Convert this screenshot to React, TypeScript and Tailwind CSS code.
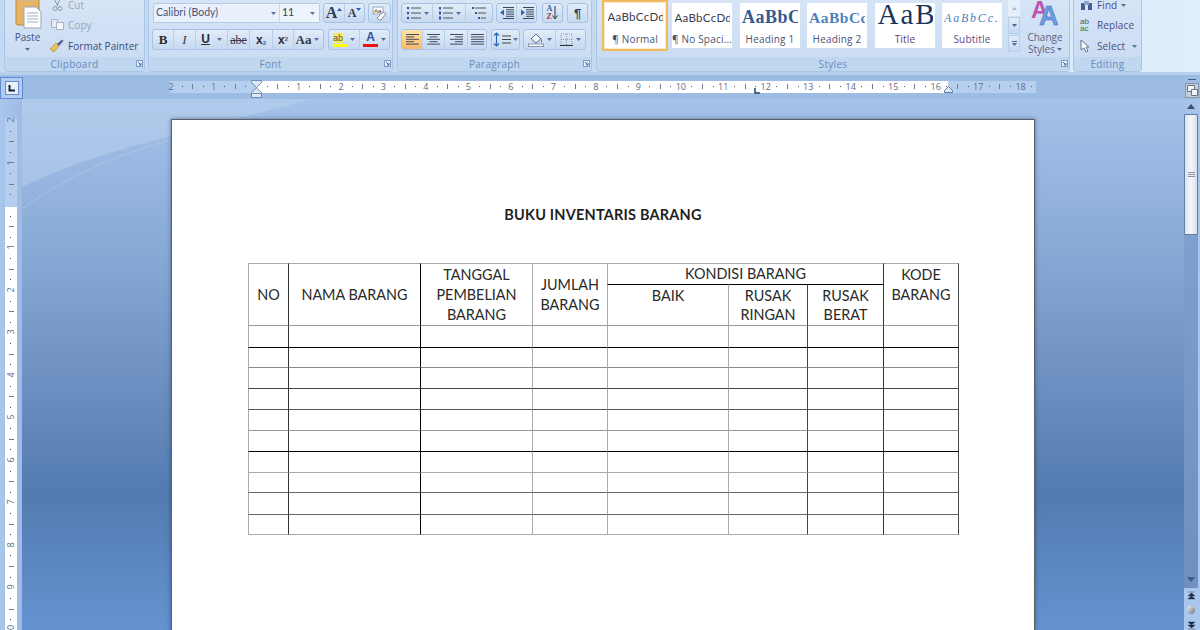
import React from "react";

const UI = "font-['Open_Sans',sans-serif]";

const Caret = ({ c = "#5a6f9c" }: { c?: string }) => (
  <svg width="5" height="3" viewBox="0 0 5 3" className="shrink-0"><path d="M0 0h5L2.5 3z" fill={c} /></svg>
);

const Launcher = () => (
  <svg width="7" height="7" viewBox="0 0 7 7" className="shrink-0">
    <rect x="0.5" y="0.5" width="6" height="6" fill="#e6eef9" stroke="#7f9cc6" />
    <path d="M2 2l3 3M5 3v2H3" stroke="#47679b" fill="none" />
  </svg>
);

function Group({ title, width, children, launcher = true }: { title: string; width: string; children: React.ReactNode; launcher?: boolean }) {
  return (
    <div className={`${width} flex h-[72px] shrink-0 flex-col overflow-hidden rounded-b-[4px] border border-t-0 border-[#a9c6e8] bg-gradient-to-b from-[#d6e4f6] to-[#c9dbf2]`}>
      <div className="relative h-[57px] shrink-0">{children}</div>
      <div className={`${UI} relative flex h-[14px] items-center justify-center bg-[#c0d7f0] pt-px text-[10px] tracking-[0.3px] text-[#6a8bbd]`}>
        {title}
        {launcher && <span className="absolute right-[1px] top-[3px] flex"><Launcher /></span>}
      </div>
    </div>
  );
}

const Box = ({ className, children }: { className: string; children: React.ReactNode }) => (
  <div className={`absolute flex items-center overflow-hidden rounded-[3px] border border-[#a7c2e4] bg-gradient-to-b from-[#e2ecf9] to-[#c6d9f0] ${className}`}>{children}</div>
);

const Cell = ({ w, children, divider = true, active = false }: { w: string; children: React.ReactNode; divider?: boolean; active?: boolean }) => (
  <div className={`${w} flex h-full shrink-0 items-center justify-center gap-[3px] ${divider ? "border-r border-[#b9cfe9]" : ""} ${active ? "bg-gradient-to-b from-[#fde3a8] to-[#fbb869]" : ""}`}>{children}</div>
);

function AlignIcon({ mode }: { mode: "l" | "c" | "r" | "j" }) {
  const rows = [0, 1, 2, 3, 4];
  const wid = (i: number) => (mode === "j" ? 13 : i % 2 ? 8 : 13);
  const x = (i: number) => (mode === "l" || mode === "j" ? 0 : mode === "c" ? (13 - wid(i)) / 2 : 13 - wid(i));
  return (
    <svg width="13" height="11" viewBox="0 0 13 11">
      {rows.map((i) => <rect key={i} x={x(i)} y={i * 2.4} width={wid(i)} height="1" fill="#444c5e" />)}
    </svg>
  );
}

const ListLines = ({ kind }: { kind: "b" | "n" | "m" }) => (
  <svg width="15" height="13" viewBox="0 0 15 13">
    {[1, 6, 11].map((y, i) => (
      <g key={y}>
        {kind === "b" && <circle cx="2" cy={y} r="1.2" fill="#2a4f9c" />}
        {kind === "n" && <rect x="1" y={y - 1.5} width="2" height="3" fill="#2f55a0" />}
        {kind === "m" && <rect x={i * 3} y={y - 1} width="2" height="2" fill="#2f55a0" />}
        <rect x={kind === "m" ? 3 + i * 3 : 5} y={y - 0.5} width={kind === "m" ? 11 - i * 3 : 10} height="1" fill="#555" />
      </g>
    ))}
  </svg>
);

const IndentIcon = ({ dir }: { dir: "l" | "r" }) => (
  <svg width="14" height="12" viewBox="0 0 14 12">
    {[0, 2.2, 4.4, 6.6, 8.8, 11].map((y, i) => <rect key={i} x={i > 0 && i < 5 ? 6 : 3} y={y} width={i > 0 && i < 5 ? 8 : 11} height="1" fill="#3d4658" />)}
    <path d={dir === "l" ? "M0 5.5l4-3v6z" : "M5 5.5l-4-3v6z"} fill="#2d63b5" />
  </svg>
);

const Tile = ({ w, preview, label, labelCls, active }: { w: string; preview: React.ReactNode; label: string; labelCls?: string; active?: boolean }) => (
  <div className={`${w} flex shrink-0 flex-col items-center overflow-hidden bg-white ${active ? "h-[51px] border-2 border-[#f3b95d] -mt-[3px] shadow-[inset_0_0_0_1px_#fdeccb]" : "h-[45px]"}`}>
    <div className="flex h-[29px] w-full items-center justify-center overflow-hidden whitespace-nowrap">{preview}</div>
    <div className={`${UI} whitespace-nowrap text-[10px] tracking-[0.2px] ${labelCls ?? "text-[#4a5472]"} ${active ? "mt-[1px]" : ""}`}>{label}</div>
  </div>
);

function HRuler() {
  const ticks: React.ReactNode[] = [];
  for (let q = -8; q <= 75; q++) {
    const x = 86 + q * 10.62;
    if (x < 1 || x > 864 || q === 0) continue;
    const n = q / 4;
    if (q % 4 === 0) {
      ticks.push(<span key={q} style={{ left: x - 10 }} className={`${UI} absolute top-[-1px] w-[20px] text-center text-[9px] leading-[14px] text-[#5d6b88]`}>{Math.abs(n)}</span>);
    } else if (q % 2 === 0) {
      ticks.push(<span key={q} style={{ left: x }} className="absolute top-[3px] h-[5px] w-px bg-[#6e7b93]" />);
    } else {
      ticks.push(<span key={q} style={{ left: x }} className="absolute top-[5px] h-px w-px bg-[#46526e]" />);
    }
  }
  return (
    <div className="relative mt-[6px] ml-[147px] h-[12px] w-[866px] bg-[#b7cfee]">
      <div className="absolute left-[86px] top-0 h-full w-[692px] bg-white" />
      {ticks}
      <svg width="11" height="18" viewBox="0 0 11 18" className="absolute left-[81px] -top-[1px]">
        <path d="M.5.5h10v2L5.500 7.500.5 2.500z M5.500 8L10.500 12.500v1H.5v-1z" fill="#dfe9f6" stroke="#6e8bb5" />
        <rect x=".5" y="13.500" width="10" height="4" fill="#dfe9f6" stroke="#6e8bb5" />
      </svg>
      <svg width="9" height="7" viewBox="0 0 9 7" className="absolute left-[774px] top-[5px]"><path d="M4.500.5l4 4v2h-8v-2z" fill="#dfe9f6" stroke="#5a7cae" /></svg>
      <svg width="6" height="6" viewBox="0 0 6 6" className="absolute left-[584px] top-[7px]"><path d="M1 0v5h5" fill="none" stroke="#1f3f73" strokeWidth="1.500" /></svg>
    </div>
  );
}

function VRuler() {
  const ticks: React.ReactNode[] = [];
  for (let q = -8; q <= 40; q++) {
    const y = 87 + q * 10.62;
    if (y < 1 || q === 0) continue;
    const n = q / 4;
    if (q % 4 === 0) {
      ticks.push(<span key={q} style={{ top: y - 7 }} className={`${UI} absolute left-0 flex h-[14px] w-[12px] -rotate-90 items-center justify-center text-[9px] text-[#5d6b88]`}>{Math.abs(n)}</span>);
    } else if (q % 2 === 0) {
      ticks.push(<span key={q} style={{ top: y }} className="absolute left-[4px] h-px w-[5px] bg-[#6e7b93]" />);
    } else {
      ticks.push(<span key={q} style={{ top: y }} className="absolute left-[5px] h-px w-px bg-[#46526e]" />);
    }
  }
  return (
    <div className="relative ml-[5px] mt-[19px] h-[513px] w-[12px] overflow-hidden bg-[#b7cfee]">
      <div className="absolute left-0 top-[89px] h-[430px] w-full bg-white" />
      {ticks}
    </div>
  );
}

const colW = [40, 132, 112, 75, 121, 79, 76, 75];
const vCol = ["#aaaaaa", "#333333", "#000000", "#aaaaaa", "#aaaaaa", "#aaaaaa", "#444444", "#333333"];
const rows = [22, 20, 21, 21, 21, 21, 21, 20, 22, 21];
const hCol = ["#999999", "#000000", "#888888", "#444444", "#555555", "#999999", "#000000", "#aaaaaa", "#666666", "#666666"];
const bc = (c: string, t: string) => ({ borderLeftColor: c, borderTopColor: t });

const Th = ({ children, col, top, span = {}, align = "middle" }: { children: React.ReactNode; col: number; top: string; span?: { colSpan?: number; rowSpan?: number }; align?: "middle" | "top" }) => (
  <td {...span} style={{ ...bc(vCol[col], top), verticalAlign: align }} className={`border-l border-t p-0 text-center font-normal ${col === 7 ? "border-r border-r-[#444444]" : ""}`}>{children}</td>
);

function DocTable() {
  return (
    <table className="ml-[76px] mt-[39px] table-fixed border-separate border-spacing-0 font-['Lato',sans-serif] text-[14.4px] leading-[20px] text-[#2a2a2a]" style={{ width: 711 }}>
      <colgroup>
        {colW.map((w, i) => <col key={i} style={{ width: i === 7 ? w + 1 : w }} />)}
      </colgroup>
      <tbody>
        <tr className="h-[21px]">
          <Th col={0} top="#aaaaaa" span={{ rowSpan: 2 }}>NO</Th>
          <Th col={1} top="#aaaaaa" span={{ rowSpan: 2 }}>NAMA BARANG</Th>
          <Th col={2} top="#aaaaaa" span={{ rowSpan: 2 }}>TANGGAL<br />PEMBELIAN<br />BARANG</Th>
          <Th col={3} top="#aaaaaa" span={{ rowSpan: 2 }}>JUMLAH<br />BARANG</Th>
          <Th col={4} top="#aaaaaa" span={{ colSpan: 3 }}>KONDISI BARANG</Th>
          <Th col={7} top="#aaaaaa" span={{ rowSpan: 2 }} align="top"><div className="pt-px">KODE<br />BARANG</div></Th>
        </tr>
        <tr className="h-[41px]">
          <Th col={4} top="#000000" align="top"><div className="pt-px leading-[19px]">BAIK</div></Th>
          <Th col={5} top="#000000" align="top"><div className="pt-px leading-[19px]">RUSAK<br />RINGAN</div></Th>
          <Th col={6} top="#000000" align="top"><div className="pt-px leading-[19px]">RUSAK<br />BERAT</div></Th>
        </tr>
        {rows.map((h, r) => (
          <tr key={r} style={{ height: h }}>
            {colW.map((_, c) => (
              <td key={c} style={bc(vCol[c], hCol[r])} className={`border-l border-t p-0 ${c === 7 ? "border-r border-r-[#444444]" : ""} ${r === rows.length - 1 ? "border-b border-b-[#aaaaaa]" : ""}`} />
            ))}
          </tr>
        ))}
      </tbody>
    </table>
  );
}

const IconSlot = ({ children }: { children: React.ReactNode }) => (
  <span className="flex w-[14px] shrink-0 justify-center">{children}</span>
);

export default function App() {
  return (
    <div className="relative flex h-[630px] w-[1200px] flex-col overflow-hidden bg-[#9dbce4]">
      {/* Ribbon */}
      <div className="flex h-[75px] shrink-0 gap-[3px] bg-gradient-to-r from-[#c5d9f1] via-[#c5d9f1] to-[#dff0fc] pl-[4px] shadow-[inset_0_-3px_0_#b8cfec]">
        <Group title="Clipboard" width="w-[141px]">
          <svg width="28" height="29" viewBox="0 0 28 29" className="absolute left-[10px] top-0">
            <rect x="1" y="-4" width="23" height="29" rx="2" fill="#e6b464" stroke="#b98a3f" />
            <rect x="5" y="-4" width="14" height="5" fill="#c9b9a0" />
            <path d="M9 7h12l5 5v16H9z" fill="#fafcfe" stroke="#9aa6b6" />
            <path d="M12 13h11M12 16h11M12 19h11M12 22h11" stroke="#a8b3c3" />
          </svg>
          <div className={`${UI} absolute left-[9px] top-[30px] flex w-[27px] flex-col items-center gap-[4px] text-[10px] leading-[14px] text-[#4a4f80]`}>
            <span>Paste</span><Caret />
          </div>
          <div className={`${UI} absolute left-[45px] top-0 flex flex-col text-[10px] leading-[14px] tracking-[0.05px]`}>
            <div className="flex h-[10px] items-center gap-[4px] text-[#9aa7bb]">
              <IconSlot><svg width="11" height="12" viewBox="0 0 11 12"><path d="M2 0l4 7M8 0L5 7" stroke="#8d96a8" fill="none" /><circle cx="3" cy="9.500" r="2" fill="none" stroke="#8d96a8" /><circle cx="8" cy="9.500" r="2" fill="none" stroke="#8d96a8" /></svg></IconSlot>
              <span>Cut</span>
            </div>
            <div className="mt-[9px] flex h-[11px] items-center gap-[4px] text-[#9aa7bb]">
              <IconSlot><svg width="13" height="11" viewBox="0 0 13 11"><path d="M.5.500h6v8h-6z" fill="#e6ecf5" stroke="#a7b2c3" /><path d="M5.500 3.500h7v7h-7z" fill="#f3f6fb" stroke="#a7b2c3" /></svg></IconSlot>
              <span>Copy</span>
            </div>
            <div className="mt-[10px] flex h-[11px] items-center gap-[4px] whitespace-nowrap text-[#3f4a78]">
              <IconSlot><svg width="14" height="14" viewBox="0 0 14 14"><path d="M0 10l6-6 3 3-5 6z" fill="#e9c25c" stroke="#a1812c" strokeWidth=".6" /><path d="M7 5l5-4.500 1.500 1.500L9 7z" fill="#5a5f8f" /></svg></IconSlot>
              <span>Format Painter</span>
            </div>
          </div>
        </Group>

        <Group title="Font" width="w-[245px]">
          <div className="absolute left-[4px] top-[3px] flex h-[20px] w-[167px] rounded-[2px] border border-[#b4cbe8] bg-[#e7f0fb] text-[#4b5577]">
            <div className="flex w-[126px] items-center justify-between border-r border-[#c7d8ee] pl-[2px] pr-[3px] font-['Lato',sans-serif] text-[10.5px] tracking-[0.05px]">Calibri (Body)<Caret /></div>
            <div className="flex flex-1 items-center justify-between bg-[#eef4fc] pl-[2px] pr-[4px] font-['Lato',sans-serif] text-[10.5px] text-[#3b3b4e]">11<Caret /></div>
          </div>
          <Box className="left-[174px] top-[3px] h-[20px] w-[42px]">
            <Cell w="w-[21px]"><span className="font-['Liberation_Serif',serif] text-[16px] font-bold leading-none text-[#33384a]">A</span><span className="-ml-[3px] -mt-[7px]"><svg width="5" height="3" viewBox="0 0 5 3"><path d="M0 3h5L2.500 0z" fill="#2c5ca8" /></svg></span></Cell>
            <Cell w="w-[19px]" divider={false}><span className="font-['Liberation_Serif',serif] text-[12px] font-bold leading-none text-[#33384a]">A</span><span className="-ml-[3px] -mt-[7px]"><Caret c="#2c5ca8" /></span></Cell>
          </Box>
          <Box className="left-[219px] top-[3px] h-[20px] w-[23px] justify-center">
            <svg width="15" height="15" viewBox="0 0 15 15"><rect x="1" y="1" width="10" height="7" fill="#fff" stroke="#9aa6b8" /><text x="2" y="7" fontSize="6" fontFamily="Liberation Sans" fill="#333">Aa</text><path d="M5 12l6-6 3 2-5 6H7z" fill="#f7f9fc" stroke="#7e8ba1" /></svg>
          </Box>
          <Box className="left-[3px] top-[29px] h-[21px] w-[172px]">
            <Cell w="w-[21px]"><span className="font-['Liberation_Serif',serif] text-[13px] font-bold text-[#2c2c34]">B</span></Cell>
            <Cell w="w-[22px]"><span className="font-['Liberation_Serif',serif] text-[13px] italic text-[#3a3a44]">I</span></Cell>
            <Cell w="w-[32px]"><span className="font-['Liberation_Sans',sans-serif] text-[12px] font-bold leading-[13px] text-[#2c2c3c] underline">U</span><span className="ml-[4px]"><Caret /></span></Cell>
            <Cell w="w-[22px]"><span className="font-['Liberation_Serif',serif] text-[12px] text-[#3a3a44] line-through">abe</span></Cell>
            <Cell w="w-[23px]"><span className="font-['Liberation_Sans',sans-serif] text-[12px] font-bold text-[#2c2c3c]">x<sub className="text-[6px] text-[#3061b0]">2</sub></span></Cell>
            <Cell w="w-[21px]"><span className="font-['Liberation_Sans',sans-serif] text-[12px] font-bold text-[#2c2c3c]">x<sup className="text-[6px] text-[#555]">2</sup></span></Cell>
            <Cell w="w-[27px]" divider={false}><span className="font-['Liberation_Serif',serif] text-[13px] font-bold text-[#33384a]">Aa</span><Caret /></Cell>
          </Box>
          <Box className="left-[179px] top-[29px] h-[21px] w-[62px]">
            <Cell w="w-[31px]">
              <span className="flex flex-col items-start"><span className="h-[10px] bg-[#f5ea60] font-['Liberation_Sans',sans-serif] text-[9px] leading-[10px] text-[#555]">ab</span><span className="mt-[1px] h-[3px] w-[14px] bg-[#ffff00]" /></span>
              <Caret />
            </Cell>
            <Cell w="w-[29px]" divider={false}>
              <span className="flex flex-col items-center"><span className="font-['Liberation_Sans',sans-serif] text-[12px] font-bold leading-[11px] text-[#2c4f9a]">A</span><span className="mt-[1px] h-[3px] w-[15px] bg-[#f01010]" /></span>
              <Caret />
            </Cell>
          </Box>
        </Group>

        <div className="ml-px flex">
        <Group title="Paragraph" width="w-[195px]">
          <Box className="left-[3px] top-[3px] h-[20px] w-[92px]">
            <Cell w="w-[31px]"><ListLines kind="b" /><Caret /></Cell>
            <Cell w="w-[33px]"><ListLines kind="n" /><Caret /></Cell>
            <Cell w="w-[26px]" divider={false}><ListLines kind="m" /></Cell>
          </Box>
          <Box className="left-[98px] top-[3px] h-[20px] w-[41px]">
            <Cell w="w-[20px]"><IndentIcon dir="l" /></Cell>
            <Cell w="w-[19px]" divider={false}><IndentIcon dir="r" /></Cell>
          </Box>
          <Box className="left-[144px] top-[3px] h-[20px] w-[21px] justify-center">
            <span className="flex flex-col font-['Liberation_Serif',serif] text-[8px] font-bold leading-[8px]"><span className="text-[#2e5fa8]">A</span><span className="text-[#a33b3b]">Z</span></span>
            <svg width="6" height="14" viewBox="0 0 6 14"><path d="M3 0v12M.5 9.500L3 13l2.500-3.500" stroke="#333" fill="none" /></svg>
          </Box>
          <Box className="left-[169px] top-[3px] h-[20px] w-[21px] justify-center">
            <span className="font-['Liberation_Sans',sans-serif] text-[13px] font-bold leading-none text-[#3d4658]">¶</span>
          </Box>
          <Box className="left-[3px] top-[29px] h-[21px] w-[86px]">
            <Cell w="w-[21px]" active><AlignIcon mode="l" /></Cell>
            <Cell w="w-[22px]"><AlignIcon mode="c" /></Cell>
            <Cell w="w-[23px]"><AlignIcon mode="r" /></Cell>
            <Cell w="w-[18px]" divider={false}><AlignIcon mode="j" /></Cell>
          </Box>
          <Box className="left-[93px] top-[29px] h-[21px] w-[29px] justify-center gap-[2px]">
            <svg width="7" height="15" viewBox="0 0 7 15"><path d="M3.500 1v13M1 3.500L3.500 1 6 3.500M1 11.500L3.500 14 6 11.500" stroke="#2d63b5" fill="none" strokeWidth="1.200" /></svg>
            <svg width="9" height="9" viewBox="0 0 9 9"><path d="M0 1h9M0 4.500h9M0 8h9" stroke="#444" /></svg>
            <Caret />
          </Box>
          <Box className="left-[125px] top-[29px] h-[21px] w-[63px]">
            <Cell w="w-[32px]">
              <svg width="16" height="14" viewBox="0 0 16 14"><path d="M3 6l5-5 5 5-5 4z" fill="#f2f5fa" stroke="#5b6c8a" /><path d="M13 6c1 2 1.500 3 1 3.500S12.500 8 13 6z" fill="#2e6bc0" /><rect x=".5" y="11" width="15" height="2.500" fill="#fdfdfd" stroke="#8b97aa" /></svg>
              <Caret />
            </Cell>
            <Cell w="w-[29px]" divider={false}>
              <svg width="13" height="13" viewBox="0 0 13 13"><path d="M1 1h11v11H1zM6.500 1v11M1 6.500h11" stroke="#8f9aab" strokeDasharray="1 1" fill="none" /><path d="M0 12.500h13" stroke="#333" /></svg>
              <Caret />
            </Cell>
          </Box>
        </Group>
        </div>

        <div className="ml-px flex">
        <Group title="Styles" width="w-[474px]">
          <div className="flex h-full items-start pl-[5px] pt-[3px]">
            <Tile w="w-[66px]" active label="¶ Normal" preview={<span className="w-[55px] overflow-hidden font-['Lato',sans-serif] text-[11.500px] tracking-[0.3px] text-[#3c3c50]">AaBbCcDdEe</span>} />
            <Tile w="ml-[4px] w-[60px]" label="¶ No Spaci..." preview={<span className="w-[55px] overflow-hidden font-['Lato',sans-serif] text-[11.500px] tracking-[0.3px] text-[#3c3c50]">AaBbCcDdEe</span>} />
            <Tile w="ml-[8px] w-[60px]" label="Heading 1" preview={<span className="w-[56px] overflow-hidden font-['Liberation_Serif',serif] text-[18px] font-bold tracking-[0.5px] text-[#35598f]">AaBbCcDd</span>} />
            <Tile w="ml-[7px] w-[60px]" label="Heading 2" preview={<span className="w-[56px] overflow-hidden font-['Liberation_Serif',serif] text-[15.500px] font-bold tracking-[0.5px] text-[#4f81bd]">AaBbCcDd</span>} />
            <Tile w="ml-[8px] w-[60px]" label="Title" labelCls="text-[#5c3c78]" preview={<span className="-mt-[8px] w-[55px] overflow-hidden font-['Liberation_Serif',serif] text-[29px] leading-[30px] tracking-[2px] text-[#17365d]">AaBbC</span>} />
            <Tile w="ml-[7px] w-[60px]" label="Subtitle" labelCls="text-[#5c4a80]" preview={<span className="w-[56px] overflow-hidden font-['Liberation_Serif',serif] text-[12px] italic tracking-[1.800px] text-[#4f81bd]">AaBbCc.Dd</span>} />
            <div className="ml-[6px] flex w-[12px] shrink-0 -mt-[3px] flex-col gap-[1px]">
              <div className="flex h-[16px] items-center justify-center bg-[#e6eef9]"><svg width="5" height="3" viewBox="0 0 5 3"><path d="M0 3h5L2.500 0z" fill="#a8b6cb" /></svg></div>
              <div className="flex h-[17px] items-center justify-center border border-[#b8cfea] bg-gradient-to-b from-[#e2ecf9] to-[#c4d8f1]"><Caret c="#4a6a9e" /></div>
              <div className="flex h-[17px] flex-col items-center justify-center gap-[1px] border border-[#b8cfea] bg-gradient-to-b from-[#e2ecf9] to-[#c4d8f1]"><span className="h-px w-[5px] bg-[#4a6a9e]" /><Caret c="#4a6a9e" /></div>
            </div>
            <div className={`${UI} ml-[5px] -mt-[3px] flex w-[40px] shrink-0 flex-col items-center text-[10px] leading-[12px] text-[#5a6485]`}>
              <svg width="28" height="26" viewBox="0 0 28 26" className="mb-[5px]">
                <text x="0" y="18" fontFamily="Liberation Sans" fontWeight="700" fontSize="24" fill="#bb55b0">A</text>
                <text x="8" y="25" fontFamily="Liberation Sans" fontWeight="700" fontSize="27" fill="#6f9be0" stroke="#3d6fc0" strokeWidth=".5">A</text>
              </svg>
              <span>Change</span>
              <span className="flex items-center gap-[2px]">Styles <Caret /></span>
            </div>
          </div>
        </Group>
        </div>

        <Group title="Editing" width="w-[69px]" launcher={false}>
          <div className={`${UI} flex h-full flex-col pl-[6px] text-[10px] leading-[14px] tracking-[0.1px] text-[#4a4f80]`}>
            <div className="flex h-[10px] items-center gap-[4px]">
              <svg width="13" height="11" viewBox="0 0 13 11"><rect x="1" y="3" width="4" height="7" fill="#47618e" /><rect x="8" y="3" width="4" height="7" fill="#47618e" /><rect x="4" y="1" width="5" height="4" fill="#8aa4cc" /></svg>
              <span>Find</span><Caret />
            </div>
            <div className="mt-[9px] flex h-[12px] items-center gap-[3px]">
              <span className="w-[14px] font-['Liberation_Sans',sans-serif] text-[8px] leading-[7px] text-[#555]">ab<br /><span className="text-[#2f7d3a]">ac</span></span>
              <span>Replace</span>
            </div>
            <div className="mt-[9px] flex h-[12px] items-center gap-[7px]">
              <svg width="10" height="14" viewBox="0 0 10 14"><path d="M1 1v10l3-2 2 4 2-1-2-4h3z" fill="#f7f9fc" stroke="#6a7588" /></svg>
              <span>Select</span><Caret />
            </div>
          </div>
        </Group>
      </div>

      {/* Ruler row */}
      <div className="flex h-[24px] shrink-0 bg-[#9dbce4]">
        <div className="mt-[2px] flex h-[22px] w-[23px] shrink-0 items-center justify-center border border-[#5f8bd0] bg-[#b4cdee]">
          <div className="flex h-[14px] w-[14px] items-center justify-center border border-[#6a8cc4] bg-[#e8f0fb]">
            <svg width="7" height="7" viewBox="0 0 7 7"><path d="M1.500 0v5.500H7" fill="none" stroke="#14233f" strokeWidth="2" /></svg>
          </div>
        </div>
        <HRuler />
        <div className="ml-auto flex w-[16px] flex-col items-center">
          <div className="mt-[4px] h-px w-[8px] bg-[#3f5a85]" />
        </div>
      </div>

      {/* Main */}
      <div className="flex h-[531px] shrink-0">
        <div className="w-[22px] shrink-0 bg-gradient-to-r from-[#a9c6ec] to-[#9dbbe5]"><VRuler /></div>
        <div className="relative h-full w-[1162px] overflow-hidden bg-[linear-gradient(180deg,#a5c2e9_0%,#88a9d6_29%,#688cbe_57%,#537bb0_74.500%,#6592d1_100%)] pl-[149px] pt-[20px]">
          <svg width="320" height="120" viewBox="0 0 320 120" className="absolute left-0 top-0">
            <path d="M0 88C55 62 100 50 149 37C200 23 250 11 290 0H0z" fill="#c0d6f1" fillOpacity=".42" />
            <path d="M0 110C45 76 100 54 149 41" fill="none" stroke="#c0d6f1" strokeOpacity=".4" />
          </svg>
          <div className="relative h-[560px] w-[864px] border-l border-r border-t border-[#5a5f69] bg-white shadow-[0_0_4px_rgba(30,45,75,0.55)]">
            <div className="pt-[86px] text-center font-['Lato',sans-serif] text-[14.500px] font-bold leading-[18px] tracking-[0.2px] text-[#1f1f1f]">BUKU INVENTARIS BARANG</div>
            <DocTable />
          </div>
        </div>
        <div className="flex w-[16px] shrink-0 flex-col bg-[#a9c6ec]">
          <div className="w-[14px] bg-[#7f9fcf]">
            <div className="flex h-[15px] items-center justify-center bg-[#a6c2e8]"><svg width="8" height="5" viewBox="0 0 8 5"><path d="M0 5h8L4 0z" fill="#3b4e70" /></svg></div>
            <div className="flex h-[121px] items-center justify-center rounded-[1px] border border-[#5f7ba8] bg-gradient-to-r from-[#dde4ee] via-[#f6f8fb] to-[#d4dde9]">
              <div className="flex flex-col gap-[1px]"><span className="h-px w-[7px] bg-[#8a94a6]" /><span className="h-px w-[7px] bg-[#8a94a6]" /><span className="h-px w-[7px] bg-[#8a94a6]" /></div>
            </div>
            <div className="h-[335px] bg-gradient-to-b from-[#7f9fcf] to-[#6f90c0]" />
            <div className="flex h-[18px] items-center justify-center bg-[#6f90c0]"><svg width="8" height="5" viewBox="0 0 8 5"><path d="M0 0h8L4 5z" fill="#3f5b88" /></svg></div>
          </div>
          <div className="flex flex-1 flex-col items-center gap-[6px] pr-[2px] pt-[3px]">
            <svg width="7" height="9" viewBox="0 0 7 9" className="shrink-0"><path d="M0 1h7M0 5l3.500-3L7 5zM0 8l3.500-3L7 8z" fill="#1d2a44" stroke="#1d2a44" strokeWidth=".4" /></svg>
            <span className="h-[8px] w-[8px] shrink-0 rounded-full bg-gradient-to-br from-[#f5f5f5] to-[#6f747e]" />
            <svg width="7" height="9" viewBox="0 0 7 9" className="mt-[1px] shrink-0"><path d="M0 1l3.500 3L7 1zM0 4l3.500 3L7 4zM0 8h7" fill="#1d2a44" stroke="#1d2a44" strokeWidth=".4" /></svg>
          </div>
        </div>
      </div>
      <span className="absolute left-[1185px] top-[83px] flex h-[15px] w-[14px] items-center justify-center border border-[#8b97ab] bg-[#c4ccd8]">
        <svg width="11" height="11" viewBox="0 0 11 11"><path d="M.5.500h7v6h-7z" fill="#f3f5f8" stroke="#68748a" /><path d="M4.500 4.500h6v6h-6z" fill="#f3f5f8" stroke="#68748a" /></svg>
      </span>
    </div>
  );
}
